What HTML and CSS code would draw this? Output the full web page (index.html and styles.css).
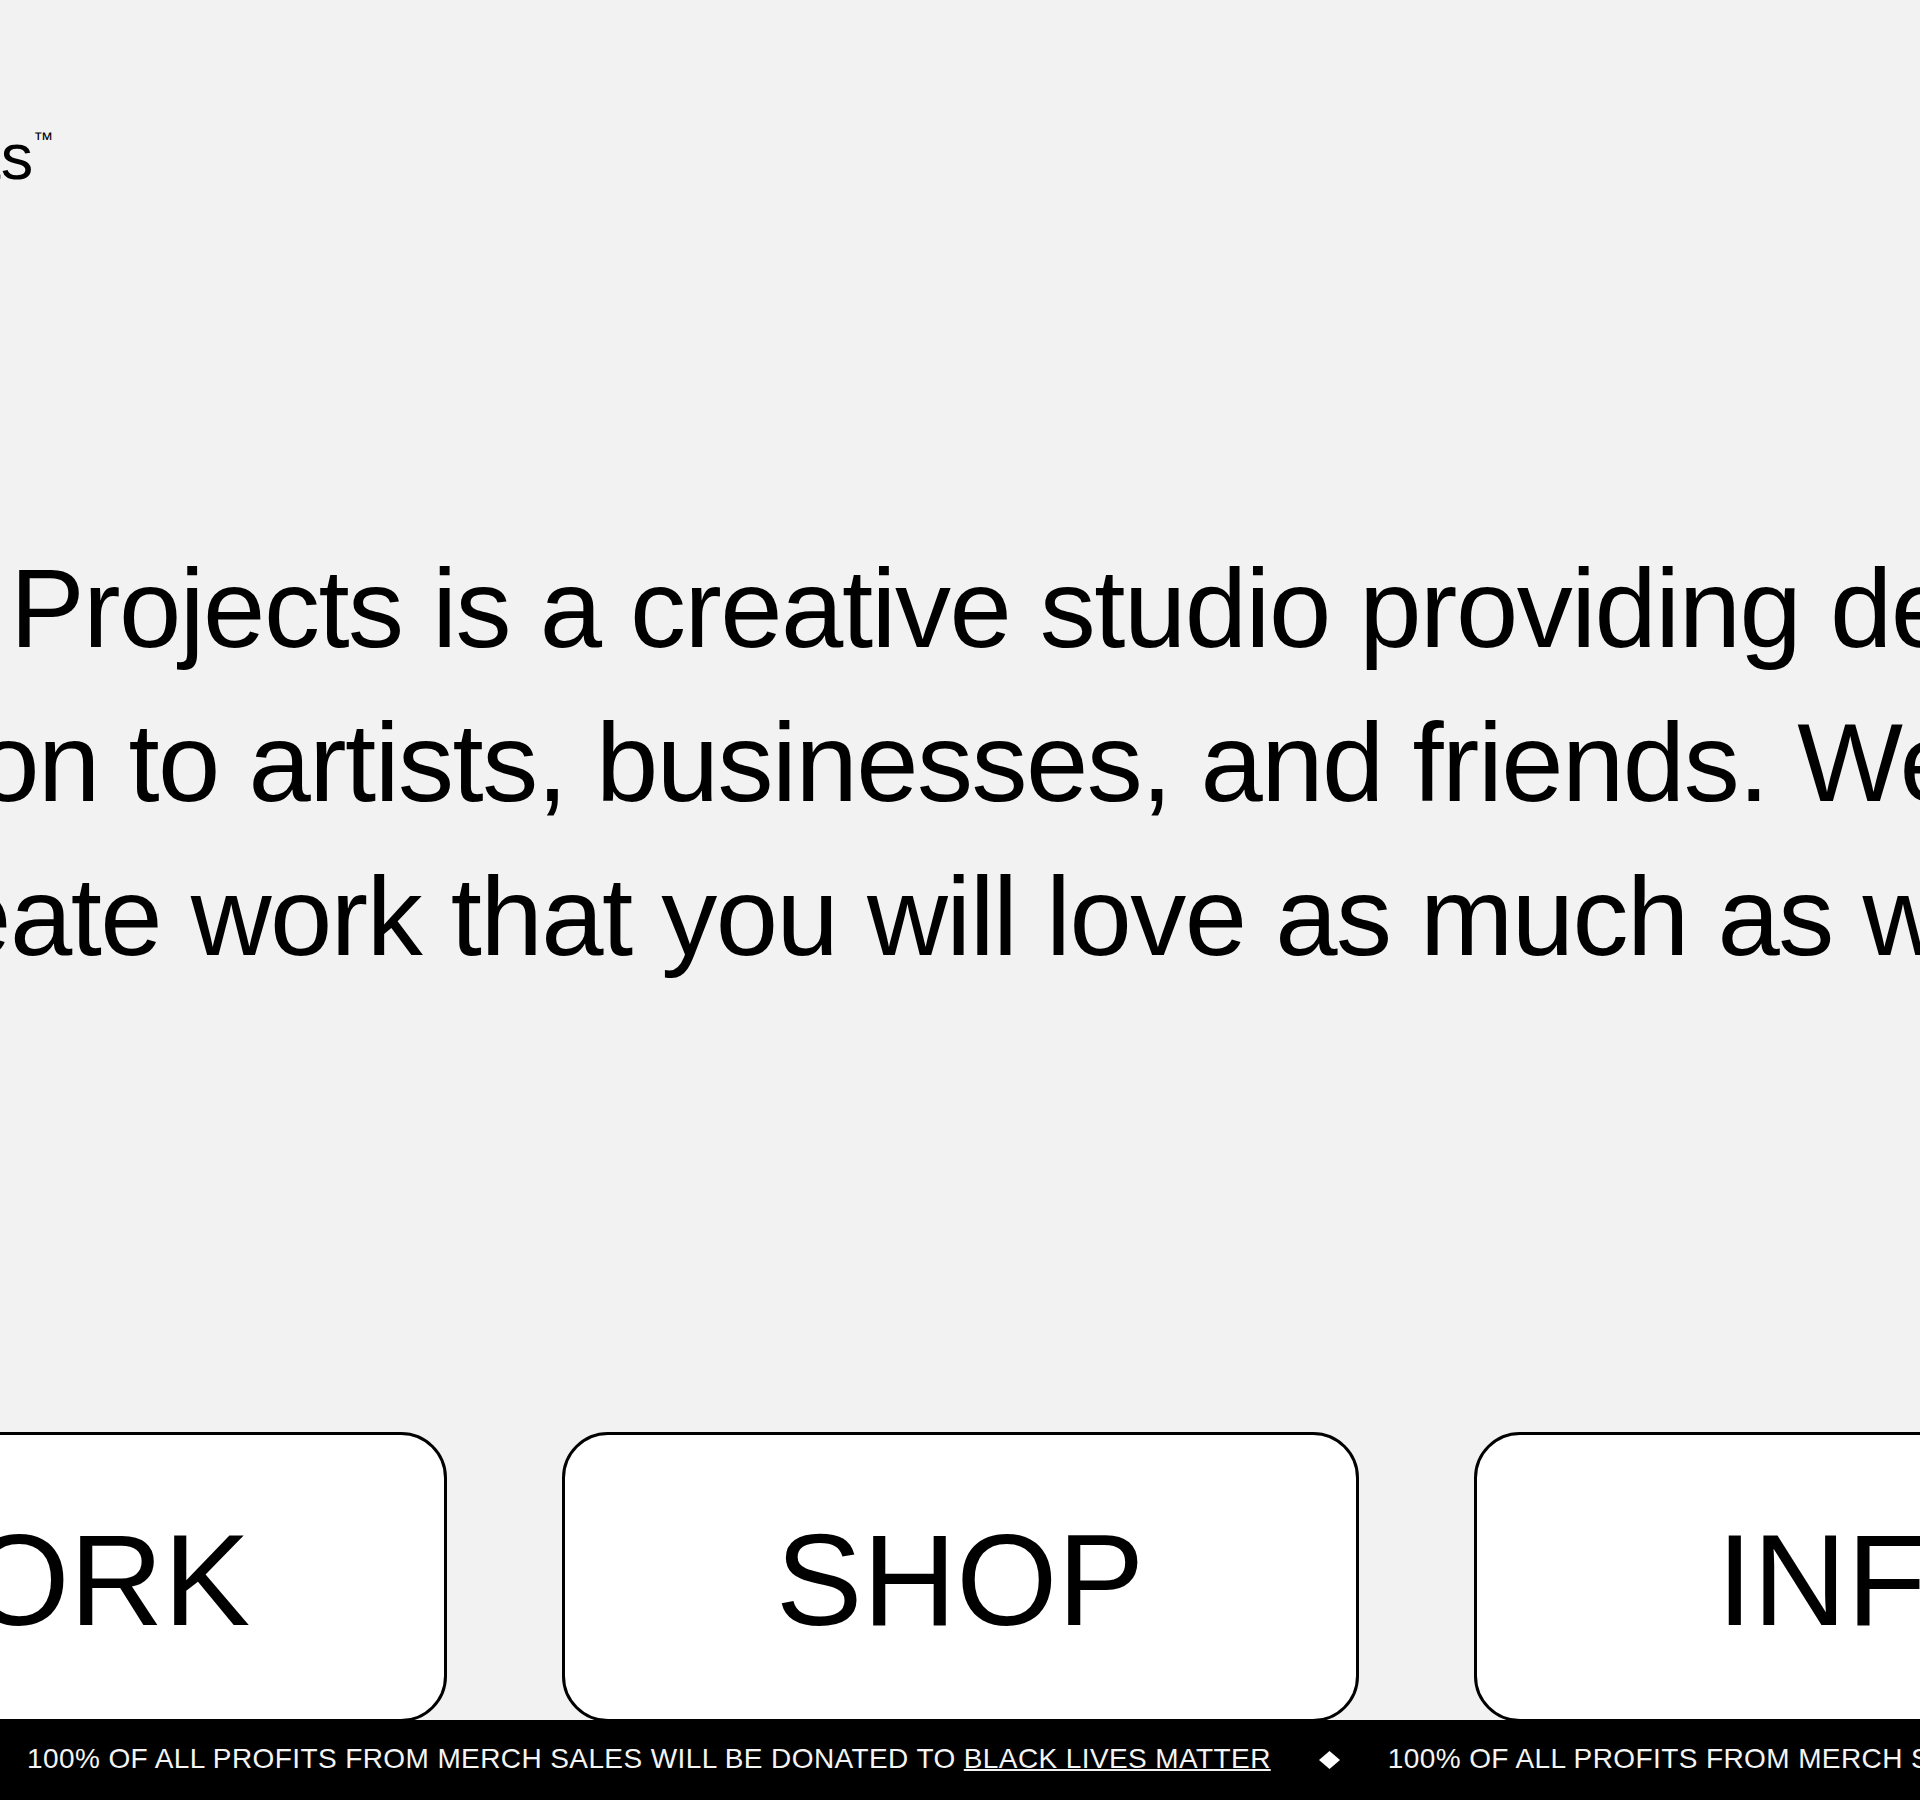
FILE: index.html
```html
<!DOCTYPE html>
<html lang="en">
<head>
    <meta charset="UTF-8">
    <meta name="viewport" content="width=device-width, initial-scale=1.0">
    <title>Ghost Projects</title>
    <link rel="stylesheet" href="styles.css">
</head>
<body>
    <div class="page">
        <div class="top">
            <header class="header">
                <a href="#" class="logo">Ghost Projects<span class="tm">™</span></a>
            </header>
            <p class="intro">
                Ghost Projects is a creative studio providing design and<br>
                direction to artists, businesses, and friends. We hope that<br>
                we create work that you will love as much as we do.
            </p>
        </div>
    </div>
    <div class="page">
        <nav class="cards">
            <a href="#" class="card">WORK</a>
            <a href="#" class="card">SHOP</a>
            <a href="#" class="card">INFO</a>
        </nav>
    </div>
    <footer class="ticker">
        <span class="ticker-text">100% OF ALL PROFITS FROM MERCH SALES WILL BE DONATED TO <a href="#">BLACK LIVES MATTER</a></span>
        <svg class="diamond" width="21" height="18" viewBox="0 0 21 18"><polygon points="10.5,0 21,9 10.5,18 0,9" fill="#fff"/></svg>
        <span class="ticker-text">100% OF ALL PROFITS FROM MERCH SALES WILL BE DONATED TO <a href="#">BLACK LIVES MATTER</a></span>
        <svg class="diamond" width="21" height="18" viewBox="0 0 21 18"><polygon points="10.5,0 21,9 10.5,18 0,9" fill="#fff"/></svg>
        <span class="ticker-text">100% OF ALL PROFITS FROM MERCH SALES WILL BE DONATED TO <a href="#">BLACK LIVES MATTER</a></span>
    </footer>
</body>
</html>
```

FILE: styles.css
```css
html, body {
    margin: 0;
    padding: 0;
}
body {
    background-color: #f2f2f2;
    color: #000;
    font-family: "Liberation Sans", Arial, sans-serif;
    overflow: hidden;
    height: 1800px;
}
a {
    color: inherit;
    text-decoration: none;
}
.page {
    display: flex;
    justify-content: center;
}
.top {
    width: 2706px;
    flex-shrink: 0;
    padding-top: 124px;
}
.logo {
    display: inline-block;
    font-size: 65px;
    line-height: 65px;
    white-space: nowrap;
}
.tm {
    font-size: 20px;
    vertical-align: 33px;
    line-height: 0;
}
.intro {
    margin: 343px 0 0;
    padding-left: 82px;
    font-size: 112px;
    line-height: 154px;
    letter-spacing: -1.5px;
    white-space: nowrap;
}
.cards {
    width: 2621px;
    flex-shrink: 0;
    display: grid;
    grid-template-columns: repeat(3, 1fr);
    gap: 115px;
    margin-top: 438px;
}
.card {
    box-sizing: border-box;
    height: 290px;
    padding-top: 6px;
    background-color: #fff;
    border: 3px solid #000;
    border-radius: 46px;
    display: flex;
    align-items: center;
    justify-content: center;
    font-size: 130px;
    line-height: 130px;
}
.ticker {
    position: fixed;
    left: 0;
    right: 0;
    bottom: 0;
    height: 80px;
    box-sizing: border-box;
    padding: 0 0 3px 27px;
    background-color: #000;
    color: #f4f4f4;
    display: flex;
    align-items: center;
    gap: 48px;
    white-space: nowrap;
    overflow: hidden;
    font-size: 28px;
    letter-spacing: 0.4px;
}
.ticker-text {
    flex-shrink: 0;
}
.ticker-text a {
    text-decoration: underline;
    text-decoration-thickness: 2px;
}
.diamond {
    flex-shrink: 0;
    margin-top: 2px;
}
```
